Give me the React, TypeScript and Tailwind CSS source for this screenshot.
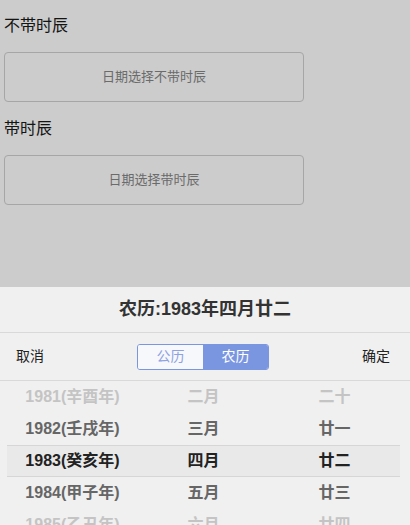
import React from "react";

const font = { fontFamily: '"Liberation Sans", "Noto Sans CJK SC", sans-serif' };

const rows = [
  { y: "1981(辛酉年)", m: "二月", d: "二十", tone: "far" },
  { y: "1982(壬戌年)", m: "三月", d: "廿一", tone: "near" },
  { y: "1983(癸亥年)", m: "四月", d: "廿二", tone: "sel" },
  { y: "1984(甲子年)", m: "五月", d: "廿三", tone: "near" },
  { y: "1985(乙丑年)", m: "六月", d: "廿四", tone: "far" },
];

export default function App() {
  return (
    <div className="relative min-h-screen bg-white" style={font}>
      <div className="px-[4px]">
        <div className="mt-[10px] h-[32px] text-[16px] leading-[32px] text-[#1a1a1a]">不带时辰</div>
        <div className="mt-[10px] flex h-[50px] w-[300px] items-center justify-center rounded-[4px] border border-[#d0d0d0] text-[13px] text-[#868686]">
          日期选择不带时辰
        </div>
        <div className="mt-[11px] h-[32px] text-[16px] leading-[32px] text-[#1a1a1a]">带时辰</div>
        <div className="mt-[10px] flex h-[50px] w-[300px] items-center justify-center rounded-[4px] border border-[#d0d0d0] text-[13px] text-[#868686]">
          日期选择带时辰
        </div>
      </div>

      <div className="fixed inset-0 bg-black/20" />

      <div className="fixed inset-x-0 top-[287px] bottom-0 overflow-hidden bg-[#f0f0f0]">
        <div className="flex h-[46px] items-center justify-center border-b border-[#d9d9d9] text-[18px] font-bold text-[#333]">
          农历:1983年四月廿二
        </div>
        <div className="flex h-[48px] items-center justify-between border-b border-[#d9d9d9] text-[14px] text-[#222]">
          <span className="pl-[16px]">取消</span>
          <div className="flex h-[26px] w-[132px] overflow-hidden rounded-[3px] border border-[#7b96e0]">
            <div className="flex flex-1 items-center justify-center bg-[#f7f8fb] text-[#8ea2e3]">公历</div>
            <div className="flex flex-1 items-center justify-center bg-[#7b96e0] text-white">农历</div>
          </div>
          <span className="pr-[20px]">确定</span>
        </div>
        <div className="pl-[7px] pr-[10px]">
          {rows.map((r) => (
            <div
              key={r.y}
              className={
                "grid h-[32px] grid-cols-3 items-center text-center text-[16px] font-bold " +
                (r.tone === "sel"
                  ? "border-y border-[#d6d6d6] bg-[#e9e9e9] text-[#222]"
                  : r.tone === "near"
                  ? "text-[#666]"
                  : "text-[#c4c4c4]")
              }
            >
              <span>{r.y}</span>
              <span>{r.m}</span>
              <span>{r.d}</span>
            </div>
          ))}
        </div>
      </div>
    </div>
  );
}
